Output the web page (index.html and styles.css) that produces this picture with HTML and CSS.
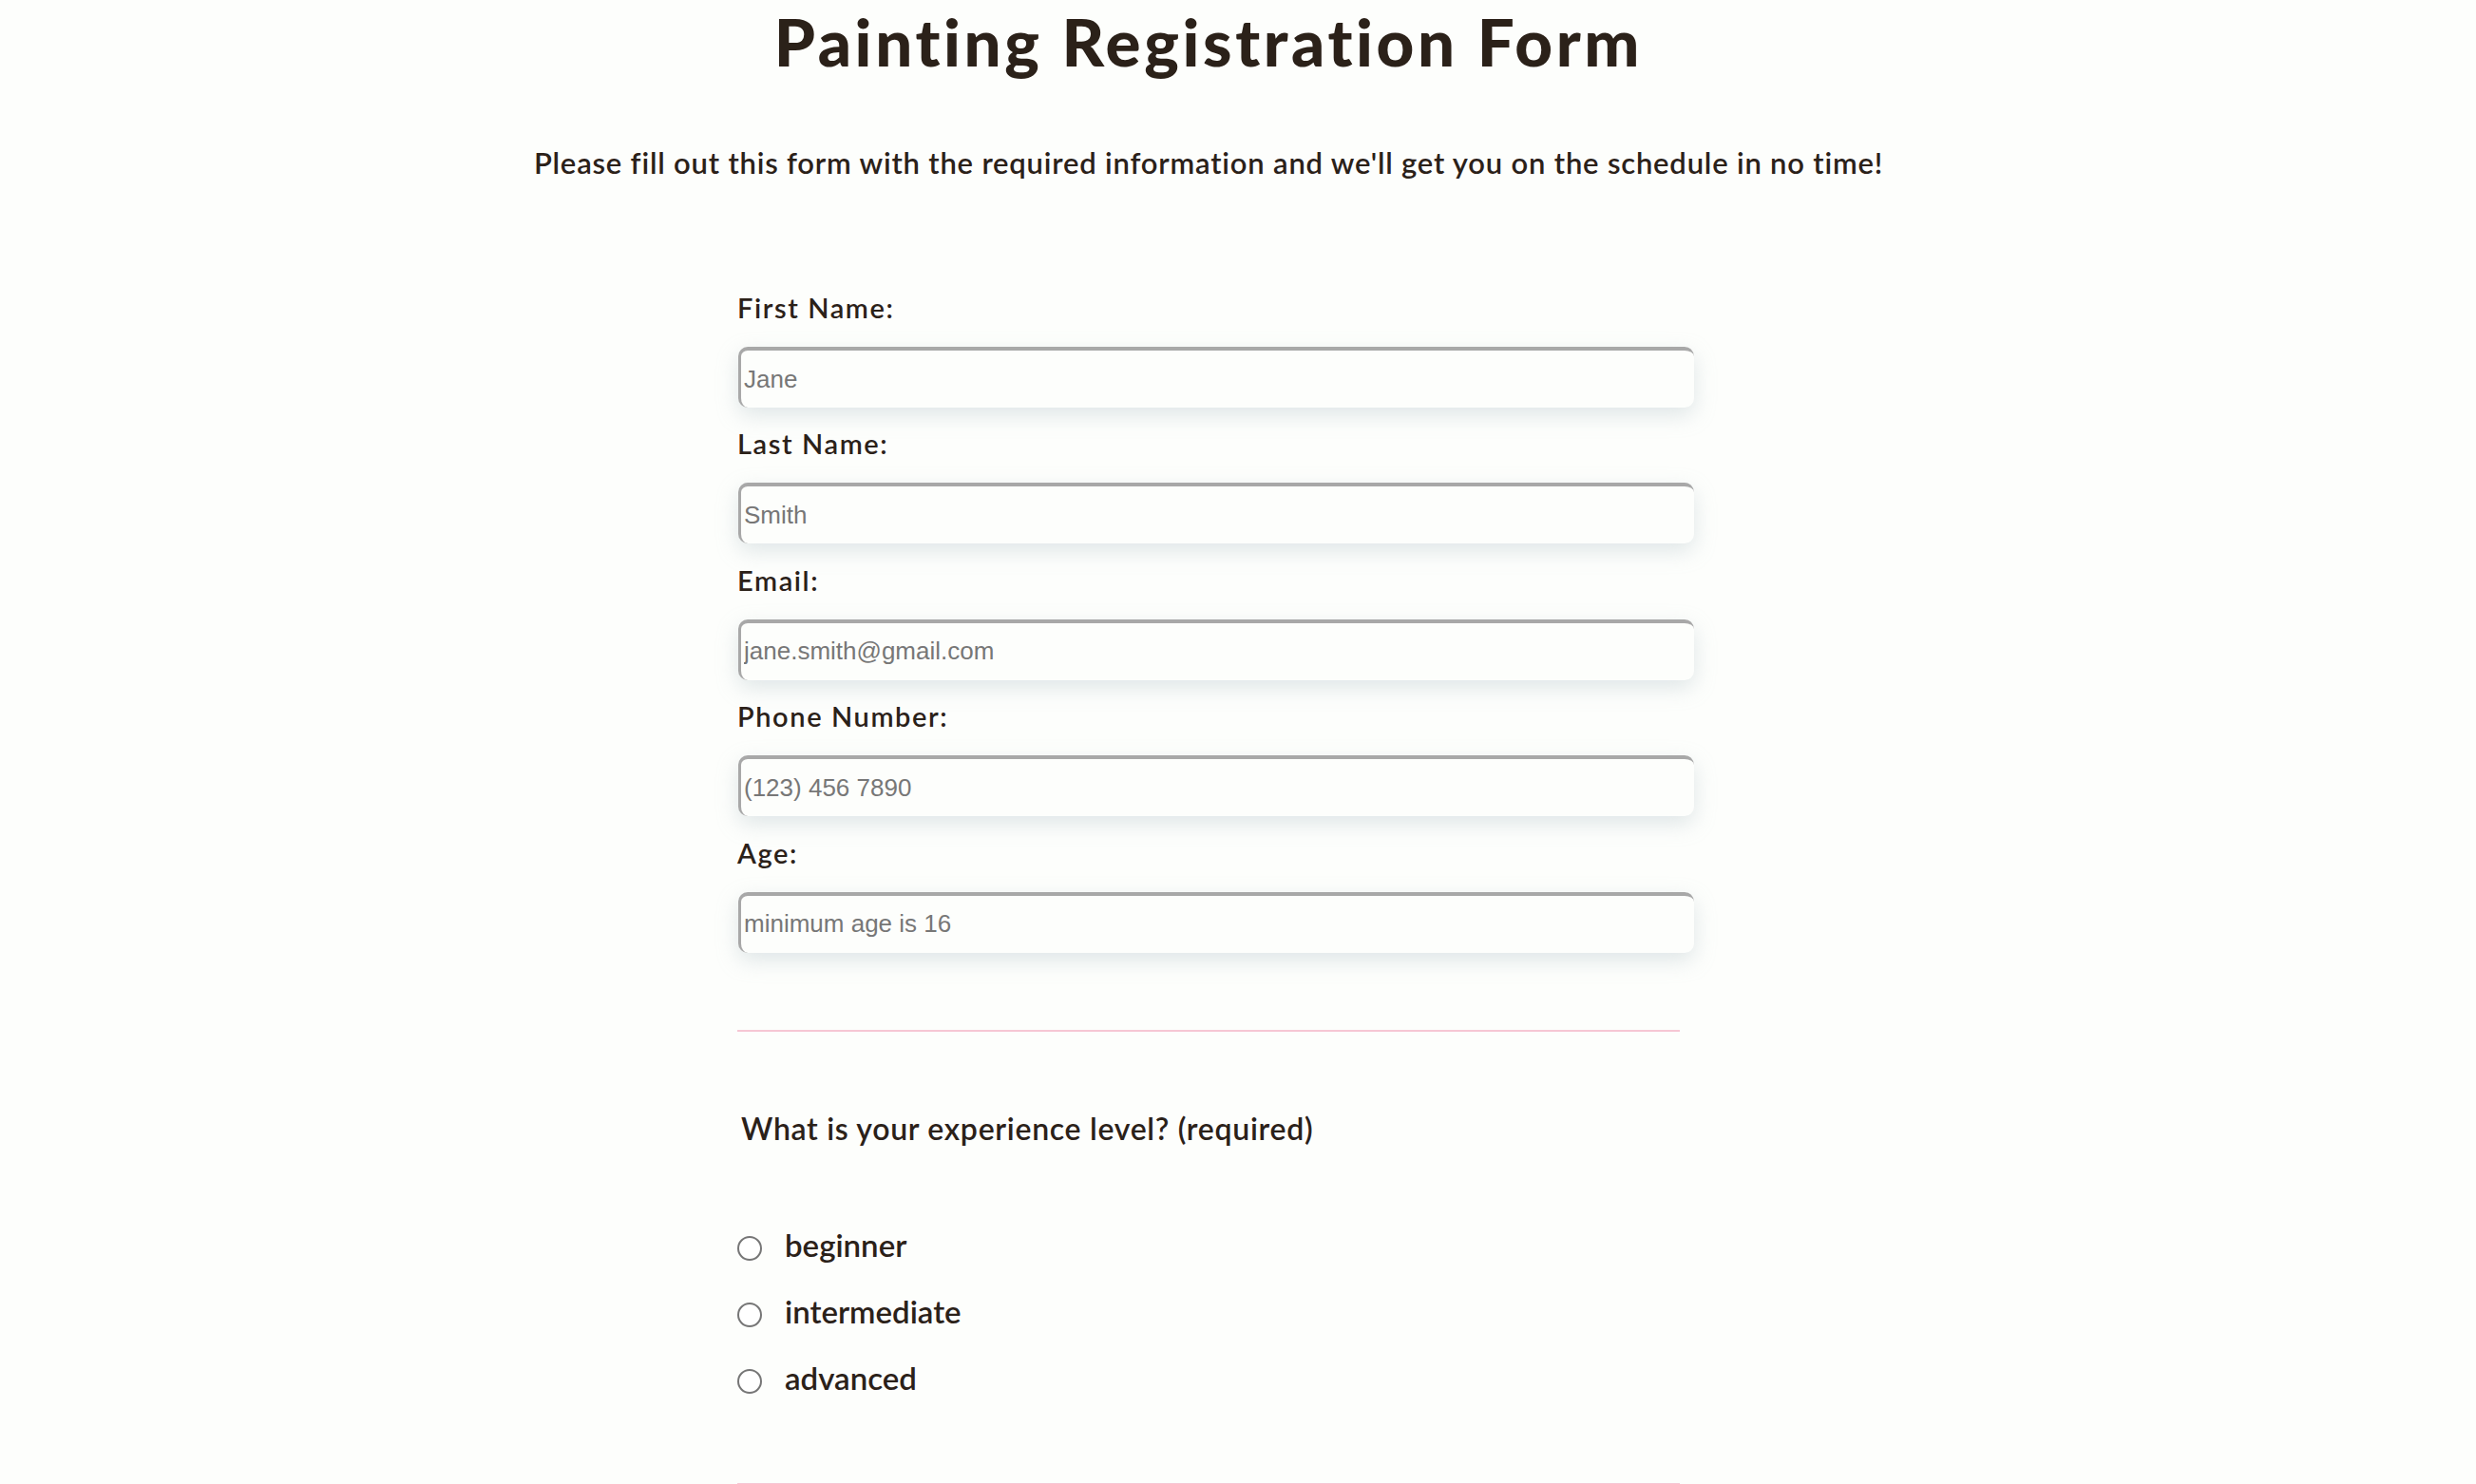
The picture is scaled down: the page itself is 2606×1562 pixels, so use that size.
FILE: index.html
```html
<!DOCTYPE html>
<html lang="en">
<head>
<meta charset="utf-8">
<title>Painting Registration Form</title>
<link rel="stylesheet" href="styles.css">
</head>
<body>
<main class="page">
  <h1 class="title">Painting Registration Form</h1>
  <p class="intro">Please fill out this form with the required information and we'll get you on the schedule in no time!</p>
  <form class="form">
    <div class="field">
      <label class="label" for="first">First Name:</label>
      <input class="text-input" id="first" type="text" placeholder="Jane">
    </div>
    <div class="field">
      <label class="label" for="last">Last Name:</label>
      <input class="text-input" id="last" type="text" placeholder="Smith">
    </div>
    <div class="field">
      <label class="label" for="email">Email:</label>
      <input class="text-input" id="email" type="email" placeholder="jane.smith@gmail.com">
    </div>
    <div class="field">
      <label class="label" for="phone">Phone Number:</label>
      <input class="text-input" id="phone" type="tel" placeholder="(123) 456 7890">
    </div>
    <div class="field">
      <label class="label" for="age">Age:</label>
      <input class="text-input" id="age" type="number" placeholder="minimum age is 16">
    </div>
    <hr class="divider divider-first">
    <p class="question">What is your experience level? (required)</p>
    <div class="options">
      <label class="option"><input class="radio" type="radio" name="level"><span class="option-text">beginner</span></label>
      <label class="option"><input class="radio" type="radio" name="level"><span class="option-text">intermediate</span></label>
      <label class="option"><input class="radio" type="radio" name="level"><span class="option-text">advanced</span></label>
    </div>
    <hr class="divider divider-second">
  </form>
</main>
</body>
</html>
```

FILE: styles.css
```css
html, body {
  margin: 0;
  padding: 0;
}

body {
  background: #fdfefc;
  color: #2b2119;
  font-family: Futura, Lato, "Noto Sans", sans-serif;
}

.page {
  width: 2544px;
}

.title {
  margin: 0;
  padding-top: 3px;
  font-size: 69px;
  line-height: 82px;
  font-weight: 900;
  letter-spacing: 3.6px;
  text-align: center;
}

.intro {
  margin: 68px 0 0;
  font-size: 31px;
  line-height: 36px;
  font-weight: 600;
  letter-spacing: 0.8px;
  text-align: center;
}

.form {
  width: 992px;
  margin: 118px auto 0;
}

.field {
  display: flex;
  flex-direction: column;
  align-items: flex-start;
}

.label {
  display: block;
  font-size: 29px;
  line-height: 34px;
  font-weight: 600;
  letter-spacing: 1.6px;
  margin-bottom: 24px;
}

.text-input {
  box-sizing: border-box;
  width: 1006px;
  height: 64px;
  margin: 0 0 21.4px 1px;
  padding: 0 0 0 3px;
  border-style: solid;
  border-width: 4px 0 0 3px;
  border-color: #a8a8a8;
  border-radius: 10px;
  background: #fdfefc;
  box-shadow: 0 8px 22px rgba(170, 185, 195, 0.35);
  font-family: "Liberation Sans", Arial, sans-serif;
  font-size: 26px;
  color: #333;
  outline: none;
}

.text-input::placeholder {
  color: #777777;
}

.text-input::-webkit-outer-spin-button,
.text-input::-webkit-inner-spin-button {
  -webkit-appearance: none;
  margin: 0;
}

.divider {
  border: 0;
  height: 2px;
  background: #f6c7d4;
  margin: 0;
}

.divider-first {
  margin-top: 60px;
}

.question {
  margin: 83px 0 0;
  padding-left: 4px;
  font-size: 32px;
  line-height: 38px;
  font-weight: 600;
  letter-spacing: 0.7px;
}

.options {
  margin-top: 72px;
  display: flex;
  flex-direction: column;
}

.option {
  display: flex;
  align-items: center;
  height: 70px;
  gap: 24px;
}

.radio {
  -webkit-appearance: none;
  appearance: none;
  box-sizing: border-box;
  width: 26px;
  height: 26px;
  margin: 0;
  border: 2px solid #767676;
  border-radius: 50%;
  background: #fff;
}

.option-text {
  font-size: 33px;
  line-height: 40px;
  font-weight: 600;
  margin-bottom: 8px;
}

.divider-second {
  margin-top: 72px;
}
```
